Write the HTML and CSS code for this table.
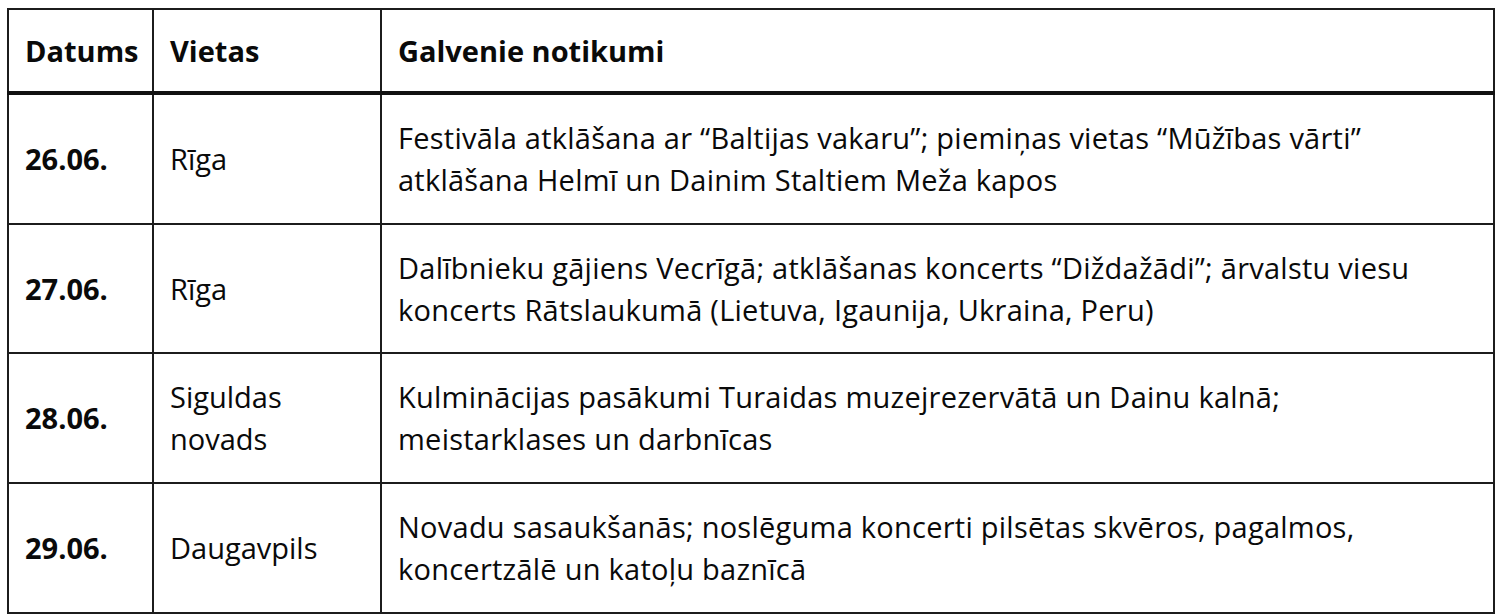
FILE: index.html
```html
<!DOCTYPE html>
<html lang="lv">
<head>
<meta charset="utf-8">
<link rel="stylesheet" href="styles.css">
</head>
<body>
<table class="events">
  <colgroup>
    <col class="c-date">
    <col class="c-place">
    <col class="c-main">
  </colgroup>
  <thead>
    <tr>
      <th>Datums</th>
      <th>Vietas</th>
      <th>Galvenie notikumi</th>
    </tr>
  </thead>
  <tbody>
    <tr>
      <td class="date">26.06.</td>
      <td>Rīga</td>
      <td class="main">Festivāla atklāšana ar “Baltijas vakaru”; piemiņas vietas “Mūžības vārti”<br>atklāšana Helmī un Dainim Staltiem Meža kapos</td>
    </tr>
    <tr>
      <td class="date">27.06.</td>
      <td>Rīga</td>
      <td class="main">Dalībnieku gājiens Vecrīgā; atklāšanas koncerts “Diždažādi”; ārvalstu viesu<br>koncerts Rātslaukumā (Lietuva, Igaunija, Ukraina, Peru)</td>
    </tr>
    <tr>
      <td class="date">28.06.</td>
      <td>Siguldas novads</td>
      <td class="main">Kulminācijas pasākumi Turaidas muzejrezervātā un Dainu kalnā;<br>meistarklases un darbnīcas</td>
    </tr>
    <tr>
      <td class="date">29.06.</td>
      <td>Daugavpils</td>
      <td class="main">Novadu sasaukšanās; noslēguma koncerti pilsētas skvēros, pagalmos,<br>koncertzālē un katoļu baznīcā</td>
    </tr>
  </tbody>
</table>
</body>
</html>
```

FILE: styles.css
```css
html, body {
  margin: 0;
  background: #ffffff;
}
body {
  padding: 8px 5px 0 7px;
  font-family: "Open Sans", "Noto Sans", "DejaVu Sans", sans-serif;
  color: #0a0a0a;
}
.events {
  border-collapse: collapse;
  width: 1488px;
  table-layout: fixed;
  font-size: 29px;
  line-height: 42px;
}
.c-date { width: 145px; }
.c-place { width: 228px; }
.events th,
.events td {
  border: 2px solid #1c1c1c;
  padding: 0 14px 0 16px;
  text-align: left;
  vertical-align: middle;
}
.events th {
  font-weight: 700;
  height: 81px;
  border-bottom: 4px solid #111111;
}
.events td {
  height: 127.7px;
}
.events td.date {
  font-weight: 700;
}
.events td.main {
  white-space: nowrap;
  letter-spacing: 0.25px;
}
```
